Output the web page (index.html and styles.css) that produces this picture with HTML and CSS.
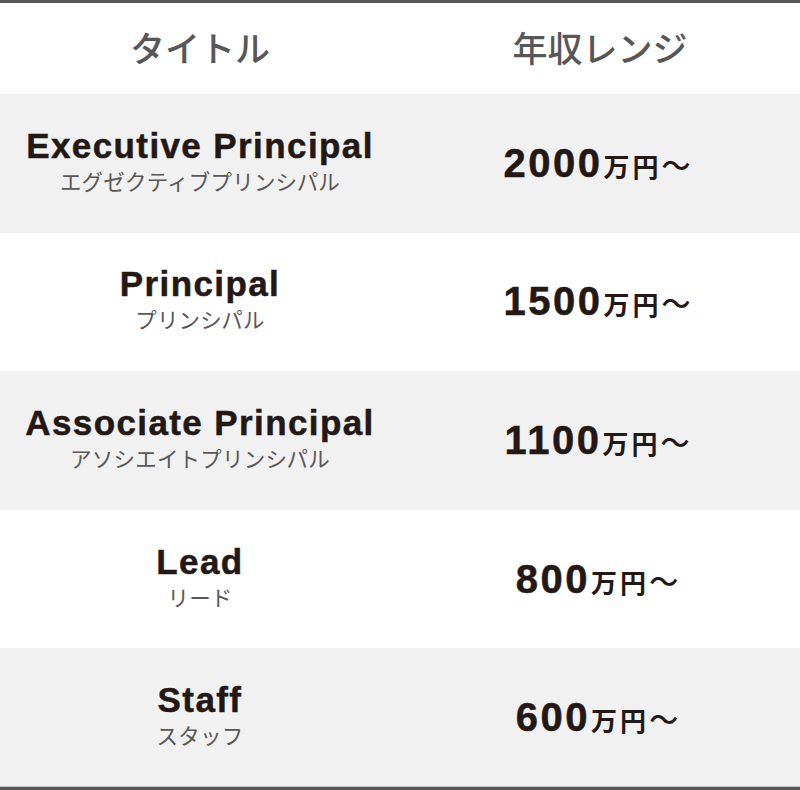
FILE: index.html
```html
<!DOCTYPE html>
<html lang="ja">
<head>
<meta charset="utf-8">
<title>年収レンジ</title>
<link rel="stylesheet" href="styles.css">
</head>
<body>
<div class="table">
  <div class="row head">
    <div class="cell"><span class="th">タイトル</span></div>
    <div class="cell"><span class="th">年収レンジ</span></div>
  </div>
  <div class="row alt">
    <div class="cell title"><span class="en">Executive Principal</span><span class="ja">エグゼクティブプリンシパル</span></div>
    <div class="cell pay"><div class="amount"><span class="num">2000</span><span class="unit">万円</span><span class="tilde">〜</span></div></div>
  </div>
  <div class="row">
    <div class="cell title"><span class="en">Principal</span><span class="ja">プリンシパル</span></div>
    <div class="cell pay"><div class="amount"><span class="num">1500</span><span class="unit">万円</span><span class="tilde">〜</span></div></div>
  </div>
  <div class="row alt">
    <div class="cell title"><span class="en">Associate Principal</span><span class="ja">アソシエイトプリンシパル</span></div>
    <div class="cell pay"><div class="amount"><span class="num">1100</span><span class="unit">万円</span><span class="tilde">〜</span></div></div>
  </div>
  <div class="row">
    <div class="cell title"><span class="en">Lead</span><span class="ja">リード</span></div>
    <div class="cell pay"><div class="amount"><span class="num">800</span><span class="unit">万円</span><span class="tilde">〜</span></div></div>
  </div>
  <div class="row alt">
    <div class="cell title"><span class="en">Staff</span><span class="ja">スタッフ</span></div>
    <div class="cell pay"><div class="amount"><span class="num">600</span><span class="unit">万円</span><span class="tilde">〜</span></div></div>
  </div>
</div>
</body>
</html>
```
FILE: styles.css
```css
html, body {
  margin: 0;
  padding: 0;
  background: #ffffff;
}
body {
  font-family: "Noto Sans CJK JP", "Liberation Sans", sans-serif;
}
.table {
  width: 800px;
  height: 790px;
  box-sizing: border-box;
  border-top: 3px solid #575757;
  border-bottom: 3px solid #575757;
  display: grid;
  grid-template-rows: 91px repeat(5, 1fr);
}
.row {
  display: grid;
  grid-template-columns: 1fr 1fr;
  background: #ffffff;
}
.row.alt {
  background: #f1f1f1;
}
.row:last-child {
  box-shadow: inset 0 -1px 0 #c8c8c8;
}
.cell {
  display: flex;
  flex-direction: column;
  align-items: center;
  justify-content: center;
}
.th {
  font-family: "Noto Sans CJK JP", sans-serif;
  font-size: 35px;
  font-weight: 500;
  color: #585757;
  line-height: 1;
  margin-bottom: 4px;
}
.title {
  padding-bottom: 6px;
}
.title .en {
  font-family: "Liberation Sans", Arial, sans-serif;
  font-weight: bold;
  font-size: 35px;
  letter-spacing: 1.4px;
  color: #231815;
  line-height: 36px;
  -webkit-text-stroke: 0.5px #231815;
}
.title .ja {
  font-family: "Noto Sans CJK JP", sans-serif;
  font-size: 21.5px;
  color: #595757;
  line-height: 24px;
  margin-top: 5px;
  letter-spacing: 0.2px;
}
.amount {
  display: flex;
  align-items: baseline;
  color: #231815;
  margin-left: -6px;
}
.pay .num {
  font-family: "Liberation Sans", Arial, sans-serif;
  font-weight: bold;
  font-size: 40px;
  letter-spacing: 2.5px;
  -webkit-text-stroke: 0.5px #231815;
}
.pay .unit {
  font-family: "Noto Sans CJK JP", sans-serif;
  font-weight: bold;
  font-size: 26px;
  letter-spacing: 3px;
  margin-left: 1px;
}
.pay .tilde {
  font-family: "Noto Sans CJK JP", sans-serif;
  font-size: 29px;
  font-weight: 500;
}
```
